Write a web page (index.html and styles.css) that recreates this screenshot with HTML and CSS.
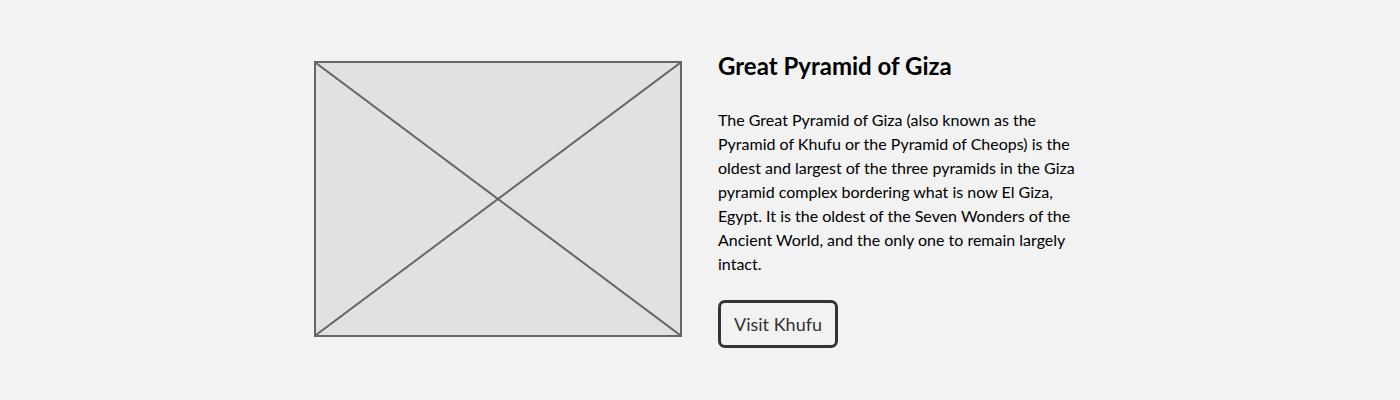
FILE: index.html
```html
<!DOCTYPE html>
<html lang="en">
<head>
<meta charset="utf-8">
<title>Great Pyramid of Giza</title>
<link rel="stylesheet" href="styles.css">
</head>
<body>
<main class="page">
  <section class="feature">
    <div class="placeholder">
      <svg class="placeholder-x" viewBox="0 0 364 272" preserveAspectRatio="none" aria-hidden="true">
        <line x1="0" y1="0" x2="364" y2="272"/>
        <line x1="364" y1="0" x2="0" y2="272"/>
      </svg>
    </div>
    <div class="content">
      <h2 class="title">Great Pyramid of Giza</h2>
      <p class="text">The Great Pyramid of Giza (also known as the Pyramid of Khufu or the Pyramid of Cheops) is the oldest and largest of the three pyramids in the Giza pyramid complex bordering what is now El Giza, Egypt. It is the oldest of the Seven Wonders of the Ancient World, and the only one to remain largely intact.</p>
      <button class="btn" type="button">Visit Khufu</button>
    </div>
  </section>
</main>
</body>
</html>
```

FILE: styles.css
```css
html, body {
  margin: 0;
  padding: 0;
  background: #f2f2f2;
}
body {
  font-family: Lato, "Open Sans", sans-serif;
  color: #000;
}
.page {
  height: 398px;
  display: flex;
  align-items: center;
  justify-content: center;
}
.feature {
  display: flex;
  align-items: center;
  gap: 36px;
}
.placeholder {
  width: 368px;
  height: 276px;
  box-sizing: border-box;
  border: 2px solid #666;
  background: #e1e1e1;
  flex: none;
}
.placeholder-x {
  display: block;
  width: 100%;
  height: 100%;
}
.placeholder-x line {
  stroke: #666;
  stroke-width: 2;
  vector-effect: non-scaling-stroke;
}
.content {
  width: 368px;
  display: flex;
  flex-direction: column;
  align-items: flex-start;
}
.title {
  margin: 0;
  font-size: 24px;
  line-height: 30px;
  font-weight: 700;
  color: #000;
}
.text {
  margin: 27px 0 0;
  font-size: 16px;
  line-height: 24px;
  color: #000;
}
.btn {
  margin-top: 24px;
  font-family: inherit;
  font-size: 18px;
  line-height: 22px;
  padding: 10px 13px;
  color: #333;
  background: transparent;
  border: 3px solid #333;
  border-radius: 7px;
}
```
